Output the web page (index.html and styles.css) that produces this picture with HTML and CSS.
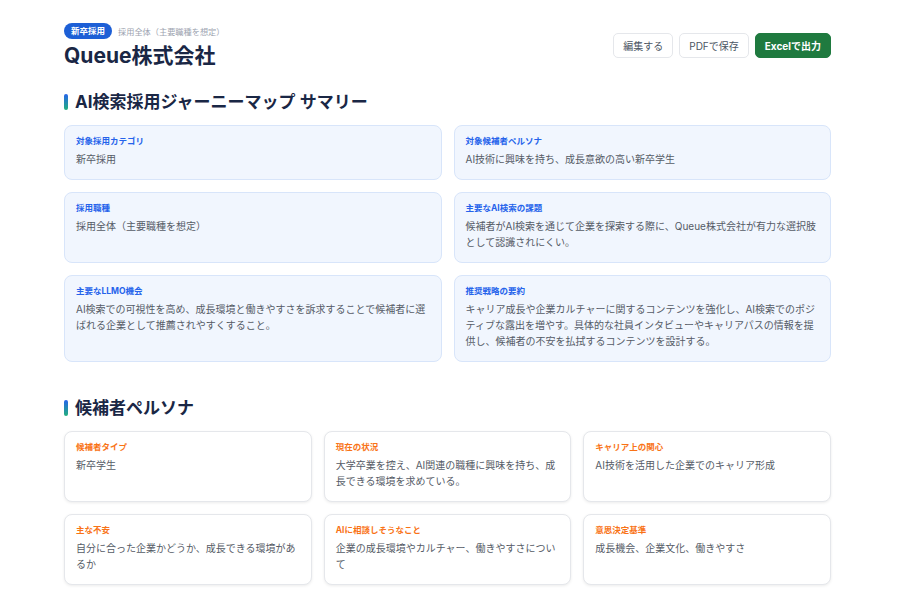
FILE: index.html
```html
<!DOCTYPE html>
<html>
<head>
  <meta charset="utf-8">
  <link rel="stylesheet" href="styles.css">
</head>
<body>
  <div class="page">
    <div class="header">
      <div class="header-left">
        <div class="header-meta">
          <span class="badge">新卒採用</span>
          <span class="meta-text">採用全体（主要職種を想定）</span>
        </div>
        <h1>Queue株式会社</h1>
      </div>
      <div class="header-actions">
        <button class="btn">編集する</button>
        <button class="btn">PDFで保存</button>
        <button class="btn btn-excel">Excelで出力</button>
      </div>
    </div>

    <div class="section">
      <h2 class="section-title">AI検索採用ジャーニーマップ サマリー</h2>
      <div class="summary-grid">
        <div class="summary-card">
          <div class="card-label">対象採用カテゴリ</div>
          <div class="card-value">新卒採用</div>
        </div>
        <div class="summary-card">
          <div class="card-label">対象候補者ペルソナ</div>
          <div class="card-value">AI技術に興味を持ち、成長意欲の高い新卒学生</div>
        </div>
        <div class="summary-card">
          <div class="card-label">採用職種</div>
          <div class="card-value">採用全体（主要職種を想定）</div>
        </div>
        <div class="summary-card">
          <div class="card-label">主要なAI検索の課題</div>
          <div class="card-value">候補者がAI検索を通じて企業を探索する際に、Queue株式会社が有力な選択肢として認識されにくい。</div>
        </div>
        <div class="summary-card">
          <div class="card-label">主要なLLMO機会</div>
          <div class="card-value">AI検索での可視性を高め、成長環境と働きやすさを訴求することで候補者に選ばれる企業として推薦されやすくすること。</div>
        </div>
        <div class="summary-card">
          <div class="card-label">推奨戦略の要約</div>
          <div class="card-value">キャリア成長や企業カルチャーに関するコンテンツを強化し、AI検索でのポジティブな露出を増やす。具体的な社員インタビューやキャリアパスの情報を提供し、候補者の不安を払拭するコンテンツを設計する。</div>
        </div>
      </div>
    </div>

    <div class="section">
      <h2 class="section-title">候補者ペルソナ</h2>
      <div class="persona-grid">
        <div class="persona-card">
          <div class="card-label persona-label">候補者タイプ</div>
          <div class="card-value">新卒学生</div>
        </div>
        <div class="persona-card">
          <div class="card-label persona-label">現在の状況</div>
          <div class="card-value">大学卒業を控え、AI関連の職種に興味を持ち、成長できる環境を求めている。</div>
        </div>
        <div class="persona-card">
          <div class="card-label persona-label">キャリア上の関心</div>
          <div class="card-value">AI技術を活用した企業でのキャリア形成</div>
        </div>
        <div class="persona-card">
          <div class="card-label persona-label">主な不安</div>
          <div class="card-value">自分に合った企業かどうか、成長できる環境があるか</div>
        </div>
        <div class="persona-card">
          <div class="card-label persona-label">AIに相談しそうなこと</div>
          <div class="card-value">企業の成長環境やカルチャー、働きやすさについて</div>
        </div>
        <div class="persona-card">
          <div class="card-label persona-label">意思決定基準</div>
          <div class="card-value">成長機会、企業文化、働きやすさ</div>
        </div>
      </div>
    </div>
  </div>
</body>
</html>
```

FILE: styles.css
```css
body {
  margin: 0;
  background: #fff;
  font-family: Inter, 'Noto Sans CJK JP', sans-serif;
  color: #1e293b;
}

.page {
  width: 767px;
  padding: 23px 0 0 64px;
}

.header {
  display: flex;
  justify-content: space-between;
  align-items: flex-start;
  margin-bottom: 19px;
}

.header-meta {
  display: flex;
  align-items: center;
  gap: 6px;
  height: 16px;
}

.badge {
  background: #1d5fd6;
  color: #fff;
  font-size: 8.5px;
  font-weight: bold;
  line-height: 16px;
  padding: 0 7px;
  border-radius: 8px;
}

.meta-text {
  font-size: 8.2px;
  color: #9ca3af;
}

.header h1 {
  margin: 2px 0 0 0;
  font-size: 21px;
  line-height: 30px;
  font-weight: bold;
  color: #1a2745;
}

.header-actions {
  display: flex;
  gap: 6px;
  margin-top: 10px;
}

.btn {
  height: 25px;
  padding: 0 9px;
  font-family: inherit;
  font-size: 10px;
  color: #4b5563;
  background: #fff;
  border: 1px solid #e5e7eb;
  border-radius: 5px;
}

.btn-excel {
  background: #1f7a3f;
  border-color: #1f7a3f;
  color: #fff;
  font-weight: bold;
}

.section {
  margin-bottom: 34px;
}

.section-title {
  display: flex;
  align-items: center;
  margin: 0 0 11px 0;
  font-size: 17px;
  line-height: 24px;
  font-weight: bold;
  color: #1a2745;
}

.section-title::before {
  content: '';
  width: 4px;
  height: 16px;
  border-radius: 2px;
  margin-right: 7px;
  background: linear-gradient(#2563eb, #22b07d);
}

.summary-grid {
  display: grid;
  grid-template-columns: 1fr 1fr;
  gap: 12px;
}

.summary-card {
  background: #f1f6fe;
  border: 1px solid #d8e5fa;
  border-radius: 8px;
  padding: 8px 11px 12px;
}

.card-label {
  font-size: 8.5px;
  font-weight: bold;
  line-height: 14px;
  color: #2563eb;
  margin-bottom: 3px;
}

.card-value {
  font-size: 10px;
  line-height: 16px;
  color: #555b66;
}

.persona-grid {
  display: grid;
  grid-template-columns: 1fr 1fr 1fr;
  gap: 12px;
}

.persona-card {
  background: #fff;
  border: 1px solid #e5e7eb;
  border-radius: 8px;
  padding: 8px 11px 12px;
  box-shadow: 0 1px 3px rgba(0, 0, 0, 0.08);
}

.persona-label {
  color: #f97316;
}
```
